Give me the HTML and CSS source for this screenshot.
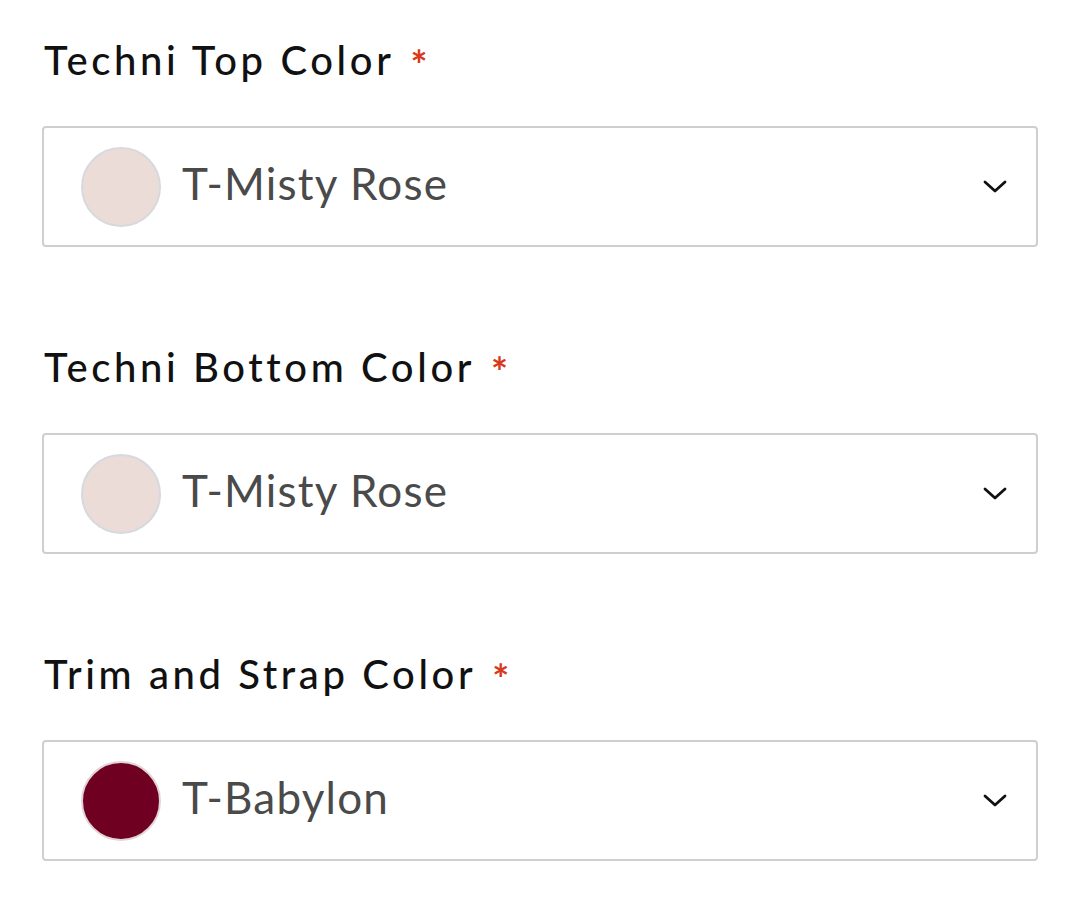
FILE: index.html
```html
<!DOCTYPE html>
<html>
<head>
<meta charset="utf-8">
<link rel="stylesheet" href="styles.css">
</head>
<body>
<div class="form">
  <div class="field">
    <div class="label">Techni Top Color <span class="req">*</span></div>
    <div class="select">
      <span class="swatch rose"></span>
      <span class="value">T-Misty Rose</span>
      <svg class="chev" width="24" height="14" viewBox="0 0 24 14"><path d="M2 2 L12 11 L22 2" fill="none" stroke="#111" stroke-width="2.8" stroke-linecap="round" stroke-linejoin="round"/></svg>
    </div>
  </div>
  <div class="field">
    <div class="label">Techni Bottom Color <span class="req">*</span></div>
    <div class="select">
      <span class="swatch rose"></span>
      <span class="value">T-Misty Rose</span>
      <svg class="chev" width="24" height="14" viewBox="0 0 24 14"><path d="M2 2 L12 11 L22 2" fill="none" stroke="#111" stroke-width="2.8" stroke-linecap="round" stroke-linejoin="round"/></svg>
    </div>
  </div>
  <div class="field">
    <div class="label">Trim and Strap Color <span class="req">*</span></div>
    <div class="select">
      <span class="swatch babylon"></span>
      <span class="value">T-Babylon</span>
      <svg class="chev" width="24" height="14" viewBox="0 0 24 14"><path d="M2 2 L12 11 L22 2" fill="none" stroke="#111" stroke-width="2.8" stroke-linecap="round" stroke-linejoin="round"/></svg>
    </div>
  </div>
</div>
</body>
</html>
```
FILE: styles.css
```css
html, body {
  margin: 0;
  padding: 0;
  background: #ffffff;
}
body {
  font-family: Lato, "Noto Sans", sans-serif;
}
.form {
  padding: 32px 42px 0 42px;
  width: 996px;
  display: flex;
  flex-direction: column;
  gap: 92px;
}
.field {
  display: flex;
  flex-direction: column;
  gap: 38px;
}
.label {
  font-size: 40px;
  line-height: 56px;
  color: #111111;
  letter-spacing: 3.6px;
  padding-left: 2px;
  font-weight: 500;
  display: flex;
  align-items: flex-start;
}
.req {
  color: #d8391c;
  font-size: 40px;
  line-height: 40px;
  margin-left: 16px;
  margin-top: 13px;
  font-weight: 700;
  letter-spacing: 0;
}
.select {
  box-sizing: border-box;
  height: 121px;
  border: 2px solid #cfcfcf;
  border-radius: 4px;
  display: flex;
  align-items: center;
  padding: 0 29px 0 37px;
}
.swatch {
  width: 80px;
  height: 80px;
  border-radius: 50%;
  box-sizing: border-box;
  border: 2px solid #d6d9de;
  flex: none;
}
.rose { background: #ecdcd8; }
.babylon { background: #6f0021; border-color: #e2d5d8; }
.value {
  margin-left: 21px;
  font-size: 44px;
  line-height: 52px;
  color: #4a4a4a;
  letter-spacing: 1.2px;
  flex: 1;
  position: relative;
  top: -4px;
}
.chev {
  flex: none;
}
```
